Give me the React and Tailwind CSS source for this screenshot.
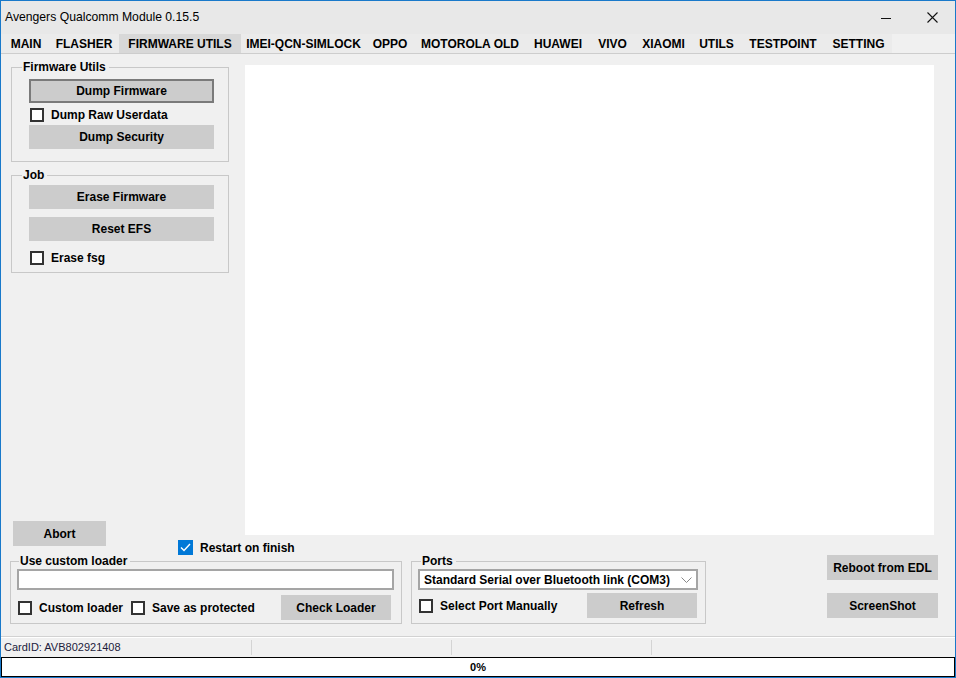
import React from 'react'

const tabs = [
  { label: 'MAIN', w: 'w-[46px]' },
  { label: 'FLASHER', w: 'w-[70px]' },
  { label: 'FIRMWARE UTILS', w: 'w-[122px]', active: true },
  { label: 'IMEI-QCN-SIMLOCK', w: 'w-[125px]' },
  { label: 'OPPO', w: 'w-[48px]' },
  { label: 'MOTOROLA OLD', w: 'w-[112px]' },
  { label: 'HUAWEI', w: 'w-[64px]' },
  { label: 'VIVO', w: 'w-[45px]' },
  { label: 'XIAOMI', w: 'w-[57px]' },
  { label: 'UTILS', w: 'w-[49px]' },
  { label: 'TESTPOINT', w: 'w-[84px]' },
  { label: 'SETTING', w: 'w-[67px]' },
]

function CheckBox({ checked }) {
  if (checked) {
    return (
      <span className="w-[15px] h-[15px] bg-[#0078d7] flex items-center justify-center shrink-0">
        <svg width="11" height="9" viewBox="0 0 11 9" fill="none">
          <path d="M1 4.5 L4 7.5 L10 1" stroke="white" strokeWidth="1.4" />
        </svg>
      </span>
    )
  }
  return <span className="w-[14px] h-[14px] border-2 border-[#333] bg-white shrink-0" />
}

function Check({ label, checked, className = '' }) {
  return (
    <div className={`flex items-center gap-[7px] ${className}`}>
      <CheckBox checked={checked} />
      <span className="whitespace-nowrap">{label}</span>
    </div>
  )
}

function Btn({ children, className = '', primary }) {
  return (
    <div
      className={`flex items-center justify-center bg-[#cccccc] whitespace-nowrap ${
        primary ? 'border-2 border-[#7a7a7a]' : ''
      } ${className}`}
    >
      {children}
    </div>
  )
}

function Group({ title, legendClass = 'ml-[10px]', className = '', children }) {
  return (
    <fieldset className={`border border-[#c8c8c8] ${className}`}>
      <legend className={`${legendClass} pl-[1px] pr-[3px] leading-[12px]`}>{title}</legend>
      {children}
    </fieldset>
  )
}

export default function App() {
  return (
    <div className="w-[956px] h-[678px] flex flex-col border border-[#1979ca] bg-[#f0f0f0] overflow-hidden font-['Liberation_Sans',Arial,sans-serif] text-black">
      {/* title bar */}
      <div className="h-[33px] shrink-0 bg-[#e8e8e8] flex items-center">
        <span className="pl-[4px] text-[12.2px] leading-none">Avengers Qualcomm Module 0.15.5</span>
        <div className="ml-auto flex h-full">
          <div className="w-[46px] h-full flex items-center justify-center">
            <svg width="10" height="10" viewBox="0 0 10 10">
              <path d="M0 5.5 H10" stroke="#111" strokeWidth="1" />
            </svg>
          </div>
          <div className="w-[46px] h-full flex items-center justify-center">
            <svg width="11" height="11" viewBox="0 0 11 11">
              <path d="M0.5 0.5 L10.5 10.5 M10.5 0.5 L0.5 10.5" stroke="#111" strokeWidth="1.1" />
            </svg>
          </div>
        </div>
      </div>

      {/* tabs */}
      <div className="h-[19px] shrink-0 flex">
        <div className="flex pl-[2px] bg-[#ebebeb]">
          {tabs.map((t) => (
            <div
              key={t.label}
              className={`${t.w} h-full flex items-center justify-center text-[12px] font-bold whitespace-nowrap ${
                t.active ? 'bg-[#d8d8d8]' : ''
              }`}
            >
              {t.label}
            </div>
          ))}
        </div>
      </div>
      <div className="h-px shrink-0 bg-[#cdcdcd]" />

      {/* content */}
      <div className="flex-1 flex flex-col text-[12px] font-bold">
        <div className="flex items-start">
          <div className="w-[244px] h-[492px] flex flex-col">
            <Group title="Firmware Utils" className="mt-[7px] ml-[10px] w-[218px]">
              <div className="pt-[6px] pb-[12px] pl-[17px]">
                <Btn primary className="w-[185px] h-[24px]">Dump Firmware</Btn>
                <Check label="Dump Raw Userdata" className="h-[22px] pt-[2px] pl-[1px]" />
                <Btn className="w-[185px] h-[24px]">Dump Security</Btn>
              </div>
            </Group>
            <Group title="Job" className="mt-[7px] ml-[10px] w-[218px]">
              <div className="pt-[4px] pb-[4px] pl-[17px]">
                <Btn className="w-[185px] h-[24px]">Erase Firmware</Btn>
                <Btn className="w-[185px] h-[24px] mt-[8px]">Reset EFS</Btn>
                <Check label="Erase fsg" className="h-[22px] mt-[5px] pt-[1px] pl-[1px]" />
              </div>
            </Group>
            <Btn className="mt-auto ml-[12px] w-[93px] h-[25px]">Abort</Btn>
          </div>
          <div className="mt-[11px] w-[689px] h-[470px] bg-white" />
        </div>

        <Check label="Restart on finish" checked className="mt-[-6px] h-[15px] pl-[177px] gap-[6px]" />

        <div className="flex items-start">
          <Group title="Use custom loader" legendClass="ml-[8px]" className="ml-[9px] w-[392px]">
            <div className="pt-[2px] pb-[3px]">
              <div className="ml-[6px] w-[377px] h-[21px] bg-white border-2 border-[#a5a5a5]" />
              <div className="flex items-center h-[25px] mt-[5px] pl-[7px]">
                <Check label="Custom loader" />
                <Check label="Save as protected" className="ml-[8px]" />
                <Btn className="ml-auto mr-[10px] w-[110px] h-[25px]">Check Loader</Btn>
              </div>
            </div>
          </Group>

          <Group title="Ports" legendClass="ml-[9px]" className="ml-[9px] w-[295px]">
            <div className="pt-[2px] pb-[5px]">
              <div className="ml-[6px] w-[280px] h-[21px] bg-white border-2 border-[#a5a5a5] flex items-center pl-[4px] pr-[4px]">
                <span className="whitespace-nowrap">Standard Serial over Bluetooth link (COM3)</span>
                <svg className="ml-auto" width="11" height="6" viewBox="0 0 11 6">
                  <path d="M0.5 0.5 L5.5 5.5 L10.5 0.5" stroke="#888" strokeWidth="1" fill="none" />
                </svg>
              </div>
              <div className="flex items-center h-[25px] mt-[3px] pl-[7px]">
                <Check label="Select Port Manually" />
                <Btn className="ml-auto mr-[8px] w-[110px] h-[25px]">Refresh</Btn>
              </div>
            </div>
          </Group>

          <div className="ml-[121px] flex flex-col">
            <Btn className="w-[111px] h-[25px]">Reboot from EDL</Btn>
            <Btn className="w-[111px] h-[25px] mt-[13px]">ScreenShot</Btn>
          </div>
        </div>
      </div>

      {/* status bar */}
      <div className="h-px shrink-0 bg-[#d2d2d2]" />
      <div className="h-px shrink-0 bg-white" />
      <div className="h-[19px] shrink-0 flex text-[11px] text-[#1c1c3c]">
        <div className="w-[251px] flex items-center pl-[3px] border-r border-[#d4d4d4] my-[2px]">CardID: AVB802921408</div>
        <div className="w-[200px] border-r border-[#d4d4d4] my-[2px]" />
        <div className="w-[200px] border-r border-[#d4d4d4] my-[2px]" />
        <div className="flex-1" />
      </div>
      <div className="h-[20px] shrink-0 border border-black bg-white flex items-center justify-center text-[11px] font-bold">
        0%
      </div>
    </div>
  )
}
